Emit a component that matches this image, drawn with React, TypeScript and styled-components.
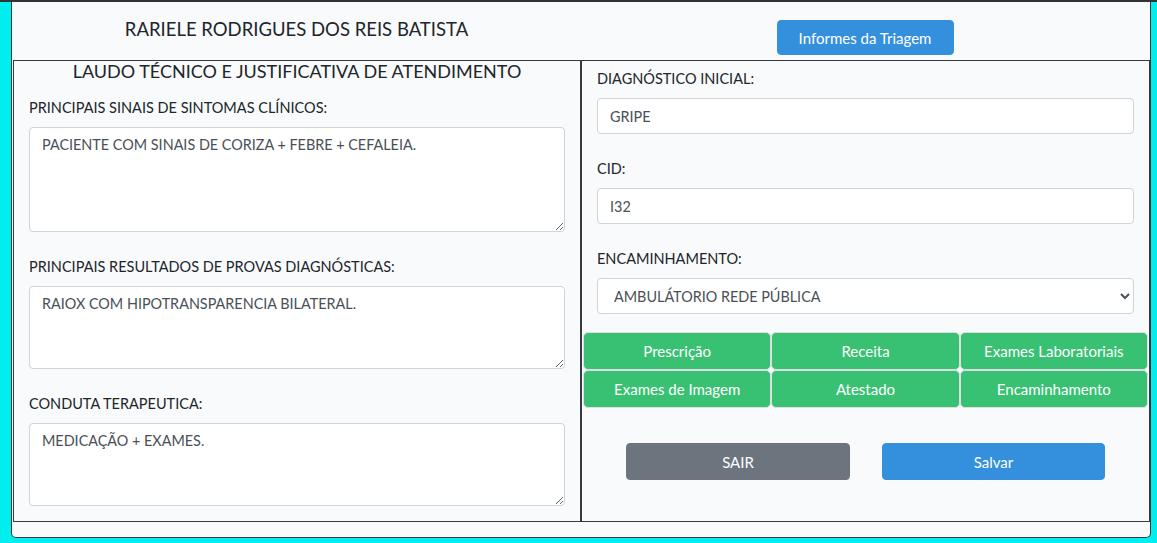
import React from "react";
import styled, { createGlobalStyle } from "styled-components";

const Global = createGlobalStyle`
  html, body { margin: 0; padding: 0; }
  body {
    background: #00eeee;
    border-top: 2px solid #2f3336;
    font-family: "Lato", "Noto Sans", sans-serif;
    font-size: 14.4px;
    color: #212529;
  }
  * { box-sizing: border-box; }
`;

const Page = styled.div`
  padding: 0 6px 5px 11px;
`;

const Modal = styled.div`
  width: 1140px;
  height: 536px;
  background: #f8fafc;
  border: 1px solid #343a40;
  border-top: none;
  border-radius: 0 0 5px 5px;
  display: flex;
  flex-direction: column;
`;

const Header = styled.div`
  display: grid;
  grid-template-columns: 567px 570px;
  margin-left: 1px;
  height: 58px;
`;

const PatientName = styled.div`
  text-align: center;
  font-size: 18.5px;
  line-height: 22px;
  padding-top: 16px;
  color: #212529;
`;

const HeaderRight = styled.div`
  display: flex;
  justify-content: center;
  padding-top: 18px;
`;

const Button = styled.button<{ $bg: string; $w?: number }>`
  background: ${(p) => p.$bg};
  color: #fff;
  border: 1px solid ${(p) => p.$bg};
  border-radius: 4px;
  font-family: inherit;
  font-size: 15px;
  height: 35px;
  width: ${(p) => (p.$w ? `${p.$w}px` : "auto")};
  padding: 0 20px;
  cursor: pointer;
`;

const Box = styled.div`
  margin-left: 1px;
  width: 1137px;
  height: 462px;
  border: 1px solid #343a40;
  display: grid;
  grid-template-columns: 567px 1fr;
`;

const LeftCol = styled.div`
  border-right: 1px solid #343a40;
  padding: 0 15px;
`;

const RightCol = styled.div`
  border-left: 1px solid #343a40;
  padding: 7px 15px 0;
`;

const Title = styled.h2`
  margin: 0 0 16px;
  font-size: 18px;
  font-weight: 400;
  line-height: 20px;
  text-align: center;
`;

const Group = styled.div<{ $mb?: number }>`
  margin-bottom: ${(p) => (p.$mb ?? 24)}px;
`;

const Label = styled.label`
  display: block;
  line-height: 22px;
  margin-bottom: 8px;
  font-size: 14.5px;
`;

const TextArea = styled.textarea<{ $h: number }>`
  display: block;
  width: 100%;
  height: ${(p) => p.$h}px;
  padding: 6px 12px;
  font-family: inherit;
  font-size: 14.4px;
  line-height: 22px;
  color: #495057;
  background: #fff;
  border: 1px solid #ced4da;
  border-radius: 4px;
`;

const Input = styled.input`
  display: block;
  width: 100%;
  height: 36px;
  padding: 6px 12px;
  font-family: inherit;
  font-size: 14.4px;
  color: #495057;
  background: #fff;
  border: 1px solid #ced4da;
  border-radius: 4px;
`;

const Select = styled.select`
  display: block;
  width: 100%;
  height: 36px;
  padding: 6px 12px;
  font-family: inherit;
  font-size: 14.4px;
  color: #495057;
  background: #fff;
  border: 1px solid #ced4da;
  border-radius: 4px;
`;

const ActionGrid = styled.div`
  display: grid;
  grid-template-columns: repeat(3, 1fr);
  margin: 18px -14px 0;
`;

const GreenButton = styled.button`
  height: 38px;
  background: #38c172;
  color: #fff;
  border: 1px solid #dcdfe2;
  border-radius: 5px;
  font-family: inherit;
  font-size: 15px;
  cursor: pointer;
`;

const Footer = styled.div`
  display: flex;
  justify-content: center;
  gap: 32px;
  margin-top: 35px;
`;

const FooterButton = styled(Button)`
  height: 37px;
`;

export default function App() {
  return (
    <>
      <Global />
      <Page>
        <Modal>
          <Header>
            <PatientName>RARIELE RODRIGUES DOS REIS BATISTA</PatientName>
            <HeaderRight>
              <Button $bg="#3490dc" $w={177}>Informes da Triagem</Button>
            </HeaderRight>
          </Header>
          <Box>
            <LeftCol>
              <Title>LAUDO TÉCNICO E JUSTIFICATIVA DE ATENDIMENTO</Title>
              <Group>
                <Label>PRINCIPAIS SINAIS DE SINTOMAS CLÍNICOS:</Label>
                <TextArea $h={105} defaultValue="PACIENTE COM SINAIS DE CORIZA + FEBRE + CEFALEIA." />
              </Group>
              <Group>
                <Label>PRINCIPAIS RESULTADOS DE PROVAS DIAGNÓSTICAS:</Label>
                <TextArea $h={83} defaultValue="RAIOX COM HIPOTRANSPARENCIA BILATERAL." />
              </Group>
              <Group $mb={0}>
                <Label>CONDUTA TERAPEUTICA:</Label>
                <TextArea $h={83} defaultValue="MEDICAÇÃO + EXAMES." />
              </Group>
            </LeftCol>
            <RightCol>
              <Group>
                <Label>DIAGNÓSTICO INICIAL:</Label>
                <Input defaultValue="GRIPE" />
              </Group>
              <Group>
                <Label>CID:</Label>
                <Input defaultValue="I32" />
              </Group>
              <Group $mb={0}>
                <Label>ENCAMINHAMENTO:</Label>
                <Select defaultValue="amb">
                  <option value="amb">AMBULÁTORIO REDE PÚBLICA</option>
                </Select>
              </Group>
              <ActionGrid>
                <GreenButton>Prescrição</GreenButton>
                <GreenButton>Receita</GreenButton>
                <GreenButton>Exames Laboratoriais</GreenButton>
                <GreenButton>Exames de Imagem</GreenButton>
                <GreenButton>Atestado</GreenButton>
                <GreenButton>Encaminhamento</GreenButton>
              </ActionGrid>
              <Footer>
                <FooterButton $bg="#6c757d" $w={224}>SAIR</FooterButton>
                <FooterButton $bg="#3490dc" $w={223}>Salvar</FooterButton>
              </Footer>
            </RightCol>
          </Box>
        </Modal>
      </Page>
    </>
  );
}
